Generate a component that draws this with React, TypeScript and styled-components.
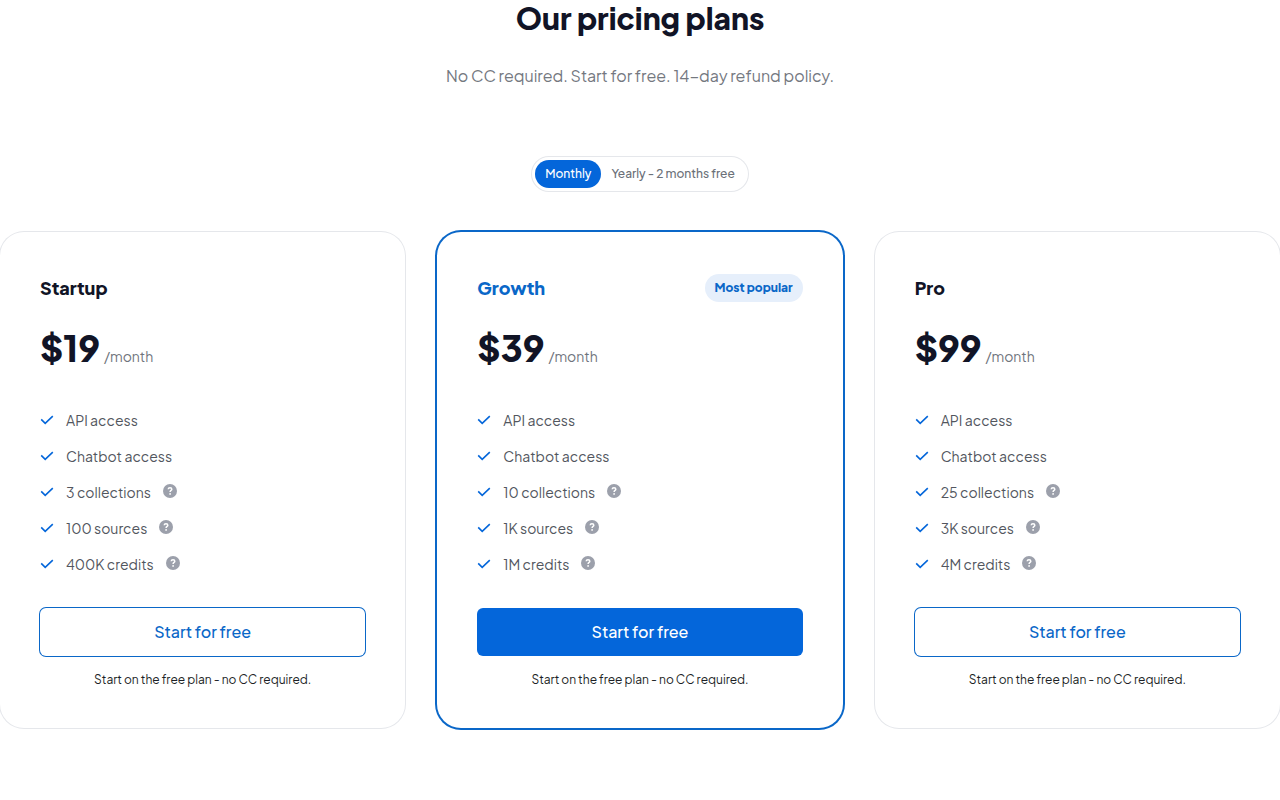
import React, { useState } from "react";
import styled, { createGlobalStyle, css } from "styled-components";

const GlobalStyle = createGlobalStyle`
  *, *::before, *::after { box-sizing: border-box; }
  body {
    margin: 0;
    background: #ffffff;
    color: #111426;
    font-family: "Plus Jakarta Sans", Inter, "Liberation Sans", sans-serif;
    -webkit-font-smoothing: antialiased;
  }
  h1, h2, p, ul, fieldset { margin: 0; padding: 0; }
`;

const blue = "#0466da";

const Page = styled.main`
  padding-bottom: 64px;
`;

const Title = styled.h1`
  font-size: 30px;
  line-height: 36px;
  font-weight: 800;
  text-align: center;
`;

const Subtitle = styled.p`
  margin-top: 28px;
  font-size: 16px;
  line-height: 24px;
  font-weight: 400;
  color: #74787f;
  text-align: center;
`;

const ToggleRow = styled.div`
  display: flex;
  justify-content: center;
  margin-top: 68px;
`;

const Toggle = styled.fieldset`
  display: flex;
  padding: 4px;
  border: 0;
  border-radius: 18px;
  box-shadow: inset 0 0 0 1px #e5e7eb;
`;

const ToggleOption = styled.label<{ $active: boolean }>`
  padding: 4px 10px;
  border-radius: 14px;
  font-size: 12px;
  line-height: 20px;
  font-weight: 500;
  cursor: pointer;
  color: ${(p) => (p.$active ? "#ffffff" : "#6b7078")};
  background: ${(p) => (p.$active ? blue : "transparent")};
`;

const HiddenRadio = styled.input`
  position: absolute;
  width: 1px;
  height: 1px;
  margin: 0;
  opacity: 0;
`;

const Plans = styled.div`
  display: grid;
  grid-template-columns: repeat(3, minmax(0, 1fr));
  gap: 32px;
  margin-top: 40px;
  @media (max-width: 900px) {
    grid-template-columns: minmax(0, 1fr);
  }
`;

const Card = styled.section<{ $featured: boolean }>`
  padding: 40px;
  border-radius: 24px;
  box-shadow: ${(p) => (p.$featured ? `0 0 0 2px #0a67c8` : "0 0 0 1px #e5e7eb")};
`;

const CardHeader = styled.div`
  display: flex;
  align-items: center;
  justify-content: space-between;
  gap: 16px;
`;

const PlanName = styled.h2<{ $featured: boolean }>`
  font-size: 18px;
  line-height: 32px;
  font-weight: 800;
  color: ${(p) => (p.$featured ? "#0a67c8" : "#111426")};
`;

const Badge = styled.span`
  padding: 4px 10px;
  border-radius: 14px;
  background: #e6effb;
  color: #0a67c8;
  font-size: 12px;
  line-height: 20px;
  font-weight: 800;
`;

const PriceRow = styled.p`
  display: flex;
  align-items: baseline;
  gap: 4px;
  margin-top: 24px;
  line-height: 40px;
`;

const Price = styled.span`
  font-size: 36px;
  font-weight: 800;
`;

const Period = styled.span`
  font-size: 14px;
  font-weight: 400;
  color: #6f747c;
`;

const Features = styled.ul`
  display: grid;
  gap: 12px;
  margin-top: 32px;
  list-style: none;
`;

const Feature = styled.li`
  display: flex;
  align-items: center;
  gap: 12px;
  font-size: 14px;
  line-height: 24px;
  font-weight: 400;
  color: #52565e;
`;

const Icon = styled.svg`
  flex: none;
  width: 14px;
  height: 14px;
`;

const HelpButton = styled.button`
  display: flex;
  padding: 0 0 2px;
  border: 0;
  background: none;
  cursor: help;
`;

const StartLink = styled.a<{ $featured: boolean }>`
  display: block;
  margin-top: 32px;
  padding: 12px;
  border-radius: 6px;
  font-size: 16px;
  line-height: 24px;
  font-weight: 500;
  text-align: center;
  text-decoration: none;
  ${(p) =>
    p.$featured
      ? css`
          background: ${blue};
          color: #ffffff;
        `
      : css`
          color: #0a67c8;
          box-shadow: 0 0 0 1px #0a67c8;
        `}
`;

const Note = styled.p`
  margin-top: 16px;
  font-size: 12px;
  line-height: 16px;
  color: #1c1f26;
  text-align: center;
`;

const CheckIcon = () => (
  <Icon viewBox="0 0 14 14" fill="none" aria-hidden="true">
    <path d="M1.2 6.4 5.2 10.3 12.8 3.2" stroke={blue} strokeWidth="1.6" />
  </Icon>
);

const HelpIcon = () => (
  <Icon viewBox="0 0 14 14" fill="none" aria-hidden="true">
    <circle cx="7" cy="7" r="7" fill="#9ca0ab" />
    <path
      d="M5.2 5.3C5.3 4.2 6 3.8 7 3.8S8.8 4.4 8.8 5.3C8.8 6.5 7.1 6.4 7.1 7.9"
      stroke="#ffffff"
      strokeWidth="1.5"
    />
    <circle cx="7.1" cy="9.9" r="0.9" fill="#ffffff" />
  </Icon>
);

type Plan = {
  name: string;
  monthly: number;
  featured?: boolean;
  limits: string[];
};

const plans: Plan[] = [
  { name: "Startup", monthly: 19, limits: ["3 collections", "100 sources", "400K credits"] },
  { name: "Growth", monthly: 39, featured: true, limits: ["10 collections", "1K sources", "1M credits"] },
  { name: "Pro", monthly: 99, limits: ["25 collections", "3K sources", "4M credits"] },
];

const periods = [
  { id: "monthly", label: "Monthly", suffix: "/month", factor: 1 },
  { id: "yearly", label: "Yearly - 2 months free", suffix: "/year", factor: 10 },
];

function PlanCard({ plan, price, suffix }: { plan: Plan; price: number; suffix: string }) {
  const featured = Boolean(plan.featured);
  return (
    <Card $featured={featured}>
      <CardHeader>
        <PlanName $featured={featured}>{plan.name}</PlanName>
        {featured && <Badge>Most popular</Badge>}
      </CardHeader>
      <PriceRow>
        <Price>${price}</Price>
        <Period>{suffix}</Period>
      </PriceRow>
      <Features>
        {["API access", "Chatbot access"].map((text) => (
          <Feature key={text}>
            <CheckIcon />
            {text}
          </Feature>
        ))}
        {plan.limits.map((text) => (
          <Feature key={text}>
            <CheckIcon />
            {text}
            <HelpButton type="button" aria-label={`About ${text}`}>
              <HelpIcon />
            </HelpButton>
          </Feature>
        ))}
      </Features>
      <StartLink href="#start" $featured={featured}>
        Start for free
      </StartLink>
      <Note>Start on the free plan - no CC required.</Note>
    </Card>
  );
}

export default function App() {
  const [periodId, setPeriodId] = useState("monthly");
  const period = periods.find((p) => p.id === periodId) ?? periods[0];
  return (
    <Page>
      <GlobalStyle />
      <Title>Our pricing plans</Title>
      <Subtitle>No CC required. Start for free. 14-day refund policy.</Subtitle>
      <ToggleRow>
        <Toggle aria-label="Payment frequency">
          {periods.map((p) => (
            <ToggleOption key={p.id} $active={p.id === periodId}>
              <HiddenRadio
                type="radio"
                name="frequency"
                value={p.id}
                checked={p.id === periodId}
                onChange={() => setPeriodId(p.id)}
              />
              {p.label}
            </ToggleOption>
          ))}
        </Toggle>
      </ToggleRow>
      <Plans>
        {plans.map((plan) => (
          <PlanCard
            key={plan.name}
            plan={plan}
            price={plan.monthly * period.factor}
            suffix={period.suffix}
          />
        ))}
      </Plans>
    </Page>
  );
}
